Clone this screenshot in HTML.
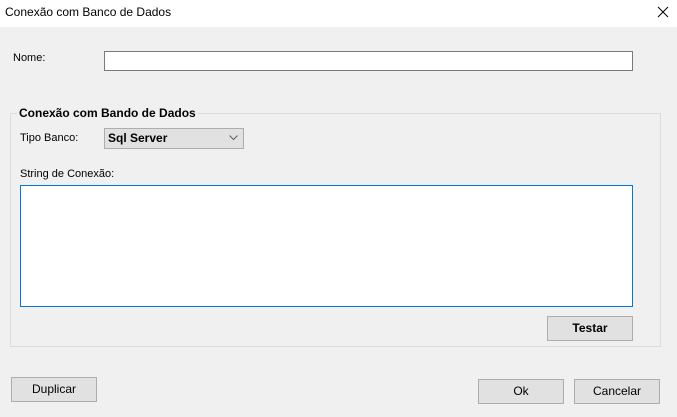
<!DOCTYPE html>
<html><head><style>
*{box-sizing:border-box}
body{margin:0;width:677px;height:417px;background:#f0f0f0;font-family:"Liberation Sans",sans-serif;font-size:12px;color:#000;position:relative;overflow:hidden}
.a{position:absolute}
.btn{position:absolute;background:#e1e1e1;border:1px solid #adadad;text-align:center;font-size:12px}
</style></head><body>
<div class="a" style="left:0;top:0;width:677px;height:27px;background:#fff"></div>
<div class="a" style="left:5px;top:5px;font-size:12px">Conexão com Banco de Dados</div>
<svg class="a" style="left:657px;top:6px" width="12" height="12"><path d="M1 1L11 11M11 1L1 11" stroke="#000" stroke-width="1"/></svg>
<div class="a" style="left:13px;top:52px;font-size:11px">Nome:</div>
<div class="a" style="left:104px;top:51px;width:529px;height:20px;background:#fff;border:1px solid #7a7a7a"></div>
<div class="a" style="left:10px;top:113px;width:651px;height:234px;border:1px solid #dcdcdc"></div>
<div class="a" style="left:17px;top:106px;padding:0 2px;background:#f0f0f0;font-weight:bold;font-size:12px">Conexão com Bando de Dados</div>
<div class="a" style="left:20px;top:132px;font-size:11px">Tipo Banco:</div>
<div class="a" style="left:104px;top:128px;width:140px;height:21px;background:#e1e1e1;border:1px solid #adadad"></div>
<div class="a" style="left:108px;top:131px;font-weight:bold;font-size:12px">Sql Server</div>
<svg class="a" style="left:229px;top:135px" width="10" height="6"><path d="M0.5 0.5L4.5 4.5L8.5 0.5" stroke="#606060" fill="none"/></svg>
<div class="a" style="left:20px;top:168px;font-size:11px">String de Conexão:</div>
<div class="a" style="left:20px;top:185px;width:613px;height:122px;background:#fff;border:1px solid #0078d7"></div>
<div class="btn" style="left:547px;top:316px;width:86px;height:25px;line-height:23px;font-weight:bold">Testar</div>
<div class="btn" style="left:11px;top:377px;width:86px;height:25px;line-height:23px">Duplicar</div>
<div class="btn" style="left:478px;top:379px;width:86px;height:25px;line-height:23px">Ok</div>
<div class="btn" style="left:574px;top:379px;width:86px;height:25px;line-height:23px">Cancelar</div>
</body></html>
